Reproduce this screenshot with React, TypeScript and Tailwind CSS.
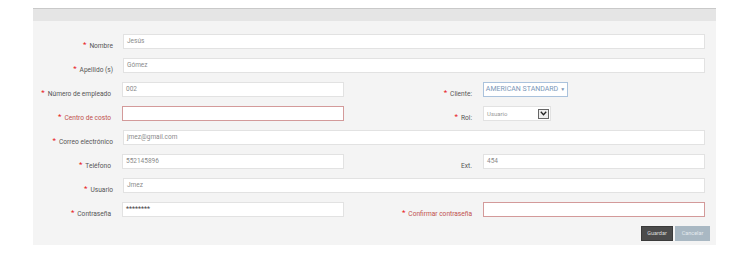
import React from 'react'

const font = { fontFamily: 'Roboto, "Liberation Sans", sans-serif' }

function Label({ text, red = false, star = true }: { text: string; red?: boolean; star?: boolean }) {
  return (
    <div className={`flex items-start justify-end pt-[5px] leading-[15px] text-[6.6px] ${red ? 'text-[#c0504d]' : 'text-[#555]'}`}>
      {star && <span className="mr-[3px] -mt-[2px] text-[8px] leading-[15px] text-[#e8141b]">*</span>}
      <span>{text}</span>
    </div>
  )
}

function Input({ value = '', red = false, className = '' }: { value?: string; red?: boolean; className?: string }) {
  return (
    <div
      className={`h-[15px] bg-white border pl-[3px] text-[6.5px] leading-[13px] text-[#8a8a8a] ${
        red ? 'border-[#d39a9a]' : 'border-[#e2e2e2]'
      } ${className}`}
    >
      {value}
    </div>
  )
}

function FullRow({ label, value, red }: { label: string; value?: string; red?: boolean }) {
  return (
    <div className="flex h-[15px]">
      <div className="w-[90px] pr-[10px]">
        <Label text={label} red={red} />
      </div>
      <Input value={value} red={red} className="flex-1" />
    </div>
  )
}

function HalfRow({ left, right }: { left: React.ReactNode; right: React.ReactNode }) {
  return (
    <div className="flex h-[15px]">
      {left}
      {right}
    </div>
  )
}

export default function App() {
  return (
    <div className="w-[735px] h-[257px] bg-white pt-[8px]" style={font}>
      <div className="ml-[33px] w-[683px] bg-[#f4f4f4]">
        <div className="h-[13px] bg-[#e5e5e5] border-t border-[#c9c9c9]" />
        <div className="pt-[13px] pr-[11px] pb-[4px] flex flex-col gap-[9px]">
          <FullRow label="Nombre" value="Jesús" />
          <FullRow label="Apellido (s)" value="Gómez" />
          <HalfRow
            left={
              <>
                <div className="w-[89px] pr-[11px]">
                  <Label text="Número de empleado" />
                </div>
                <Input value="002" className="w-[222px]" />
              </>
            }
            right={
              <>
                <div className="w-[139px] pr-[11px]">
                  <Label text="Cliente:" />
                </div>
                <div className="h-[15px] w-[85px] bg-white border border-[#aac2dc] flex items-center justify-center text-[7px] text-[#7b97b8]">
                  AMERICAN STANDARD
                  <span className="ml-[2px] text-[5px]">▼</span>
                </div>
              </>
            }
          />
          <HalfRow
            left={
              <>
                <div className="w-[89px] pr-[11px]">
                  <Label text="Centro de costo" red />
                </div>
                <Input red className="w-[222px]" />
              </>
            }
            right={
              <>
                <div className="w-[139px] pr-[11px]">
                  <Label text="Rol:" />
                </div>
                <div className="h-[15px] w-[68px] bg-white border border-[#e2e2e2] flex items-center justify-between pl-[3px] pr-[1px] text-[6px] text-[#999]">
                  Usuario
                  <span className="w-[11px] h-[10px] border border-[#666] bg-[#eee] flex items-center justify-center">
                    <svg width="7" height="5" viewBox="0 0 7 5">
                      <path d="M0.8 0.8 L3.5 3.8 L6.2 0.8" fill="none" stroke="#222" strokeWidth="1.3" />
                    </svg>
                  </span>
                </div>
              </>
            }
          />
          <FullRow label="Correo electrónico" value="jmez@gmail.com" />
          <HalfRow
            left={
              <>
                <div className="w-[89px] pr-[11px]">
                  <Label text="Teléfono" />
                </div>
                <Input value="552145896" className="w-[222px]" />
              </>
            }
            right={
              <>
                <div className="w-[139px] pr-[11px]">
                  <Label text="Ext." star={false} />
                </div>
                <Input value="454" className="flex-1" />
              </>
            }
          />
          <FullRow label="Usuario" value="Jmez" />
          <HalfRow
            left={
              <>
                <div className="w-[89px] pr-[11px]">
                  <Label text="Contraseña" />
                </div>
                <Input value="********" className="w-[222px] !text-[#444] !text-[7px]" />
              </>
            }
            right={
              <>
                <div className="w-[139px] pr-[11px]">
                  <Label text="Confirmar contraseña" red />
                </div>
                <Input red className="flex-1" />
              </>
            }
          />
          <div className="flex justify-end gap-[2px] -mr-[5px]">
            <button className="h-[15px] w-[32px] bg-[#4b4b4b] border border-[#3a3a3a] text-[5.5px] text-[#ddd]">
              Guardar
            </button>
            <button className="h-[15px] w-[35px] bg-[#a9b8c3] text-[5.5px] text-[#e4eaee]">
              Cancelar
            </button>
          </div>
        </div>
      </div>
    </div>
  )
}
